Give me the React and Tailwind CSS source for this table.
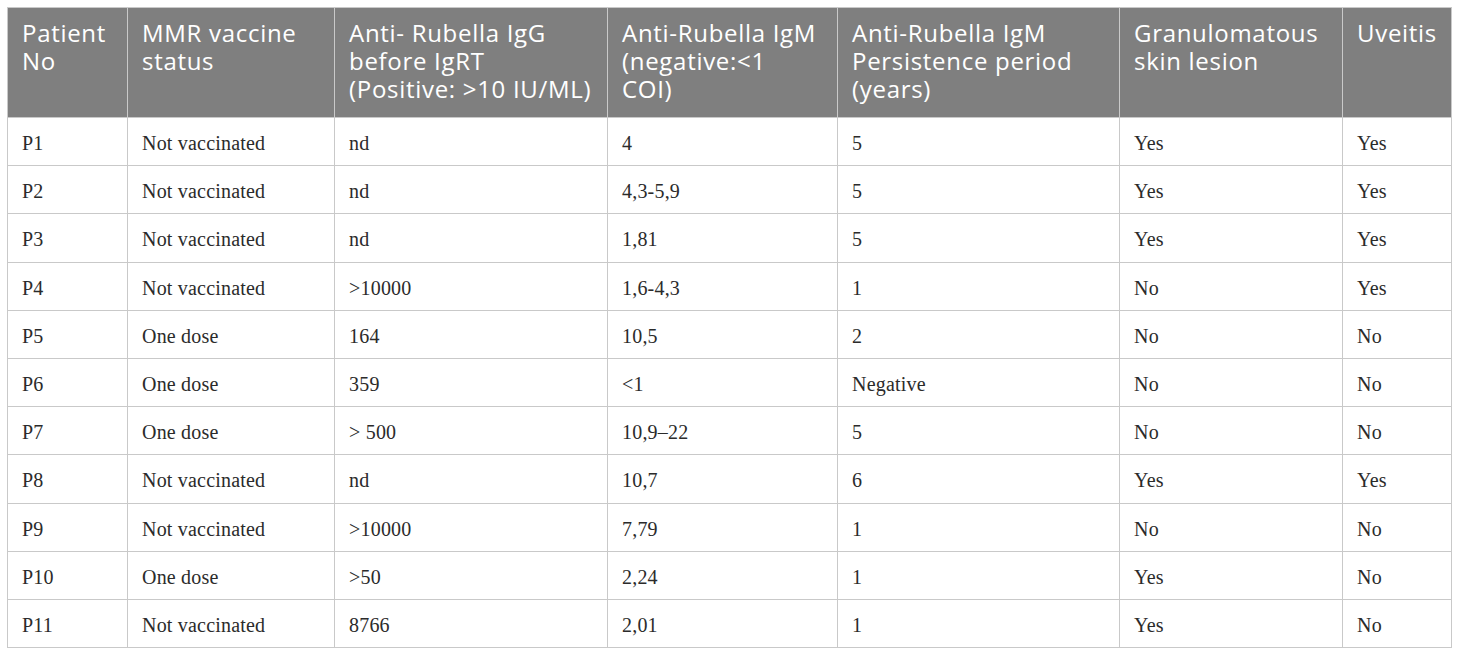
const headers = [
  [['Patient', 'No'], 'w-[120px]'],
  [['MMR vaccine', 'status'], 'w-[207px]'],
  [['Anti- Rubella IgG', 'before IgRT', '(Positive: >10 IU/ML)'], 'w-[273px]'],
  [['Anti-Rubella IgM', '(negative:<1', 'COI)'], 'w-[230px]'],
  [['Anti-Rubella IgM', 'Persistence period', '(years)'], 'w-[282px]'],
  [['Granulomatous', 'skin lesion'], 'w-[223px]'],
  [['Uveitis'], 'w-[109px]'],
]

const rows = [
  ['P1', 'Not vaccinated', 'nd', '4', '5', 'Yes', 'Yes'],
  ['P2', 'Not vaccinated', 'nd', '4,3-5,9', '5', 'Yes', 'Yes'],
  ['P3', 'Not vaccinated', 'nd', '1,81', '5', 'Yes', 'Yes'],
  ['P4', 'Not vaccinated', '>10000', '1,6-4,3', '1', 'No', 'Yes'],
  ['P5', 'One dose', '164', '10,5', '2', 'No', 'No'],
  ['P6', 'One dose', '359', '<1', 'Negative', 'No', 'No'],
  ['P7', 'One dose', '> 500', '10,9–22', '5', 'No', 'No'],
  ['P8', 'Not vaccinated', 'nd', '10,7', '6', 'Yes', 'Yes'],
  ['P9', 'Not vaccinated', '>10000', '7,79', '1', 'No', 'No'],
  ['P10', 'One dose', '>50', '2,24', '1', 'Yes', 'No'],
  ['P11', 'Not vaccinated', '8766', '2,01', '1', 'Yes', 'No'],
]

export default function App() {
  return (
    <div className="bg-white w-[1460px] h-[656px] pt-[7px] pl-[7px]">
      <table className="table-fixed border-collapse w-[1445px]">
        <thead>
          <tr className="bg-[#7f7f7f] h-[110px]">
            {headers.map(([lines, w]) => (
              <th
                key={lines.join(' ')}
                className={`${w} border border-[#c9c9c9] align-top text-left font-normal text-white pl-[14px] pr-[4px] pt-[11px] text-[24px] tracking-[0.7px] leading-[28px] whitespace-nowrap font-['Open_Sans',sans-serif]`}
              >
                {lines.map(l => (
                  <div key={l}>{l}</div>
                ))}
              </th>
            ))}
          </tr>
        </thead>
        <tbody>
          {rows.map(r => (
            <tr key={r[0]} className="h-[48.2px]">
              {r.map((c, i) => (
                <td
                  key={i}
                  className="border border-[#c9c9c9] px-[14px] pt-[3px] align-middle text-[20px] tracking-[0.2px] text-[#2b2b2b] font-['Liberation_Serif',serif]"
                >
                  {c}
                </td>
              ))}
            </tr>
          ))}
        </tbody>
      </table>
    </div>
  )
}
